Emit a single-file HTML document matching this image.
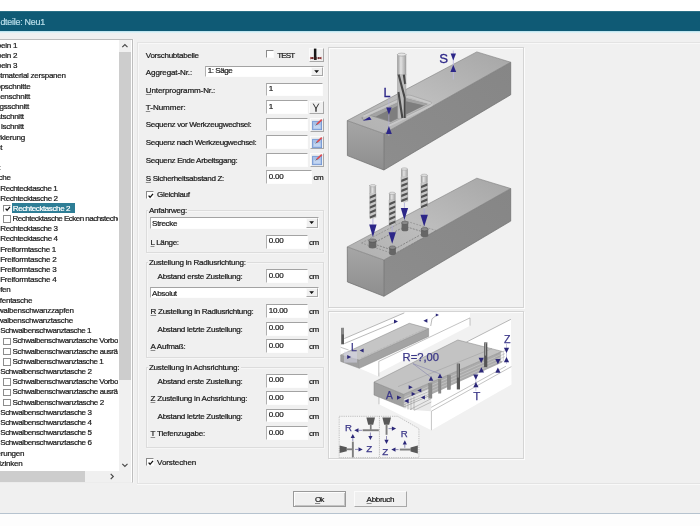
<!DOCTYPE html>
<html><head><meta charset="utf-8"><title>Neu1</title>
<style>
html,body{margin:0;padding:0;overflow:hidden;}
body{width:700px;height:526px;position:relative;overflow:hidden;background:#f0f0f0;font-family:"Liberation Sans",sans-serif;}
div{position:absolute;-webkit-text-stroke:0.22px currentColor;}
</style></head><body><div style="left:-6px;top:-6px;width:712px;height:538px;overflow:hidden;will-change:transform;background:#f0f0f0;filter:blur(0.35px);"><div style="left:6px;top:6px;width:700px;height:526px;">

<div style="position:absolute;left:-6px;top:-6px;width:712px;height:17px;background:#ffffff;"></div>
<div style="position:absolute;left:-6px;top:11px;width:712px;height:20px;background:#0f5a75;"></div>
<div style="position:absolute;left:-6px;top:11px;width:712px;height:1px;background:#2a6f86;"></div>
<div style="position:absolute;left:-6px;top:30.7px;width:712px;height:1.9px;background:linear-gradient(#b4dfec,#eaf6f9);"></div>
<div style="position:absolute;left:0.4px;top:16.8px;line-height:10px;font-size:8.9px;letter-spacing:-0.24156197916666677px;color:#b9dde9;white-space:nowrap;">dteile: Neu1</div>
<div style="position:absolute;left:-6px;top:513.4px;width:712px;height:1px;background:#b6c3cf;"></div>
<div style="position:absolute;left:-6px;top:514.4px;width:712px;height:18px;background:#fdfdfd;"></div>
<div style="position:absolute;left:-7px;top:39.2px;width:139.6px;height:443.4px;background:#fff;box-sizing:border-box;border:1px solid #bcbcbc;border-bottom-color:#ececec;border-right:1.5px solid #bebebe;"></div>
<div style="position:absolute;left:119.2px;top:40.2px;width:11.6px;height:430.6px;background:#f0f0f0;"></div>
<div style="position:absolute;left:119.2px;top:52.2px;width:11.6px;height:327.8px;background:#cdcdcd;"></div>
<svg style="position:absolute;left:119.2px;top:40.2px" width="12" height="12" viewBox="0 0 12 12"><path d="M3.3 7.2 L5.9 4.6 L8.5 7.2" fill="none" stroke="#4a4a4a" stroke-width="1.2"/></svg>
<svg style="position:absolute;left:119.2px;top:459px" width="12" height="12" viewBox="0 0 12 12"><path d="M3.3 4.8 L5.9 7.4 L8.5 4.8" fill="none" stroke="#4a4a4a" stroke-width="1.2"/></svg>
<div style="position:absolute;left:-6px;top:470.8px;width:136.8px;height:11px;background:#f0f0f0;"></div>
<div style="position:absolute;left:-6px;top:470.8px;width:91px;height:11px;background:#cdcdcd;"></div>
<svg style="position:absolute;left:106px;top:470.8px" width="12" height="11" viewBox="0 0 12 11"><path d="M4.7 2.9 L7.3 5.5 L4.7 8.1" fill="none" stroke="#4a4a4a" stroke-width="1.2"/></svg>
<div style="left:0;top:40.2px;width:118.2px;height:431.2px;overflow:hidden;">
<div style="position:absolute;left:-3.1832312500000026px;top:0.6px;line-height:10px;font-size:8.05px;letter-spacing:-0.27px;color:#1a1a1a;white-space:nowrap;">bein 1</div>
<div style="position:absolute;left:-3.083231250000001px;top:10.795px;line-height:10px;font-size:8.05px;letter-spacing:-0.27px;color:#1a1a1a;white-space:nowrap;">bein 2</div>
<div style="position:absolute;left:-3.083231250000001px;top:20.990000000000002px;line-height:10px;font-size:8.05px;letter-spacing:-0.27px;color:#1a1a1a;white-space:nowrap;">bein 3</div>
<div style="position:absolute;left:-3.5923640625px;top:31.184999999999995px;line-height:10px;font-size:8.05px;letter-spacing:-0.27px;color:#1a1a1a;white-space:nowrap;">stmaterial zerspanen</div>
<div style="position:absolute;left:-3.566805468750005px;top:41.38px;line-height:10px;font-size:8.05px;letter-spacing:-0.27px;color:#1a1a1a;white-space:nowrap;">ppschnitte</div>
<div style="position:absolute;left:-4.066805468750005px;top:51.57500000000001px;line-height:10px;font-size:8.05px;letter-spacing:-0.27px;color:#1a1a1a;white-space:nowrap;">genschnitt</div>
<div style="position:absolute;left:-0.40768984375000317px;top:61.77px;line-height:10px;font-size:8.05px;letter-spacing:-0.27px;color:#1a1a1a;white-space:nowrap;">gsschnitt</div>
<div style="position:absolute;left:-3.719206250000003px;top:71.965px;line-height:10px;font-size:8.05px;letter-spacing:-0.27px;color:#1a1a1a;white-space:nowrap;">atschnitt</div>
<div style="position:absolute;left:-5.237689843750001px;top:82.16px;line-height:10px;font-size:8.05px;letter-spacing:-0.27px;color:#1a1a1a;white-space:nowrap;">h lschnitt</div>
<div style="position:absolute;left:-2.093266406250003px;top:92.35499999999998px;line-height:10px;font-size:8.05px;letter-spacing:-0.27px;color:#1a1a1a;white-space:nowrap;">rkierung</div>
<div style="position:absolute;left:-3.391516406250001px;top:102.55px;line-height:10px;font-size:8.05px;letter-spacing:-0.27px;color:#1a1a1a;white-space:nowrap;">st</div>
<div style="position:absolute;left:0px;top:112.74500000000002px;line-height:10px;font-size:8.05px;letter-spacing:0.0px;color:#1a1a1a;white-space:nowrap;"></div>
<div style="position:absolute;left:-5.543574218750001px;top:122.94000000000001px;line-height:10px;font-size:8.05px;letter-spacing:-0.27px;color:#1a1a1a;white-space:nowrap;">e:</div>
<div style="position:absolute;left:-5.294115625px;top:133.13500000000002px;line-height:10px;font-size:8.05px;letter-spacing:-0.27px;color:#1a1a1a;white-space:nowrap;">sche</div>
<div style="position:absolute;left:0.3px;top:143.33px;line-height:10px;font-size:8.05px;letter-spacing:-0.43671484375000036px;color:#1a1a1a;white-space:nowrap;">Rechtecktasche 1</div>
<div style="position:absolute;left:0.3px;top:153.525px;line-height:10px;font-size:8.05px;letter-spacing:-0.41796484375000054px;color:#1a1a1a;white-space:nowrap;">Rechtecktasche 2</div>
<div style="position:absolute;left:3.4px;top:164.42000000000002px;width:7.6px;height:7.6px;background:#fff;box-sizing:border-box;border-top:1px solid #8a8a8a;border-left:1px solid #8a8a8a;border-right:1px solid #fbfbfb;border-bottom:1px solid #fbfbfb;"><svg width="8" height="8" viewBox="0 0 8 8" style="position:absolute;left:-0.5px;top:-0.5px"><path d="M1.6 3.6 L3.1 5.3 L6 1.9" fill="none" stroke="#111" stroke-width="1.3"/></svg></div>
<div style="position:absolute;left:11.9px;top:162.92000000000002px;width:63px;height:9.6px;background:#2e7e96;"></div>
<div style="position:absolute;left:12.8px;top:163.72px;line-height:10px;font-size:8.05px;letter-spacing:-0.41796484375000054px;color:#fff;white-space:nowrap;">Rechtecktasche 2</div>
<div style="position:absolute;left:3.4px;top:175.115px;width:7.6px;height:7.6px;background:#fff;box-sizing:border-box;border:1px solid #8c8c8c;"></div>
<div style="position:absolute;left:12.6px;top:173.915px;line-height:10px;font-size:8.05px;letter-spacing:-0.542852587890625px;color:#1a1a1a;white-space:nowrap;">Rechtecktasche Ecken nachstechen</div>
<div style="position:absolute;left:0.3px;top:184.10999999999999px;line-height:10px;font-size:8.05px;letter-spacing:-0.4242148437500002px;color:#1a1a1a;white-space:nowrap;">Rechtecktasche 3</div>
<div style="position:absolute;left:0.3px;top:194.30500000000004px;line-height:10px;font-size:8.05px;letter-spacing:-0.41796484375000054px;color:#1a1a1a;white-space:nowrap;">Rechtecktasche 4</div>
<div style="position:absolute;left:0.2px;top:204.50000000000003px;line-height:10px;font-size:8.05px;letter-spacing:-0.2809374511718752px;color:#1a1a1a;white-space:nowrap;">Freiformtasche 1</div>
<div style="position:absolute;left:0.2px;top:214.69500000000002px;line-height:10px;font-size:8.05px;letter-spacing:-0.26218745117187536px;color:#1a1a1a;white-space:nowrap;">Freiformtasche 2</div>
<div style="position:absolute;left:0.2px;top:224.89000000000001px;line-height:10px;font-size:8.05px;letter-spacing:-0.26218745117187536px;color:#1a1a1a;white-space:nowrap;">Freiformtasche 3</div>
<div style="position:absolute;left:0.2px;top:235.085px;line-height:10px;font-size:8.05px;letter-spacing:-0.26218745117187536px;color:#1a1a1a;white-space:nowrap;">Freiformtasche 4</div>
<div style="position:absolute;left:-4.057689843750001px;top:245.28px;line-height:10px;font-size:8.05px;letter-spacing:-0.27px;color:#1a1a1a;white-space:nowrap;">pfen</div>
<div style="position:absolute;left:-4.4553796875000025px;top:255.475px;line-height:10px;font-size:8.05px;letter-spacing:-0.27px;color:#1a1a1a;white-space:nowrap;">pfentasche</div>
<div style="position:absolute;left:-6.446660937500003px;top:265.67px;line-height:10px;font-size:8.05px;letter-spacing:-0.27px;color:#1a1a1a;white-space:nowrap;">hwalbenschwanzzapfen</div>
<div style="position:absolute;left:-6.694603125000004px;top:275.865px;line-height:10px;font-size:8.05px;letter-spacing:-0.27px;color:#1a1a1a;white-space:nowrap;">hwalbenschwanztasche</div>
<div style="position:absolute;left:0.2px;top:286.06000000000006px;line-height:10px;font-size:8.05px;letter-spacing:-0.4221886393229172px;color:#1a1a1a;white-space:nowrap;">Schwalbenschwanztasche 1</div>
<div style="position:absolute;left:3.4px;top:297.45500000000004px;width:7.6px;height:7.6px;background:#fff;box-sizing:border-box;border:1px solid #8c8c8c;"></div>
<div style="position:absolute;left:12.6px;top:296.25500000000005px;line-height:10px;font-size:8.05px;letter-spacing:-0.4313932617187506px;color:#1a1a1a;white-space:nowrap;">Schwalbenschwanztasche Vorbohren</div>
<div style="position:absolute;left:3.4px;top:307.65000000000003px;width:7.6px;height:7.6px;background:#fff;box-sizing:border-box;border:1px solid #8c8c8c;"></div>
<div style="position:absolute;left:12.6px;top:306.45000000000005px;line-height:10px;font-size:8.05px;letter-spacing:-0.4165427490234377px;color:#1a1a1a;white-space:nowrap;">Schwalbenschwanztasche ausräumen</div>
<div style="position:absolute;left:3.4px;top:317.845px;width:7.6px;height:7.6px;background:#fff;box-sizing:border-box;border:1px solid #8c8c8c;"></div>
<div style="position:absolute;left:12.6px;top:316.64500000000004px;line-height:10px;font-size:8.05px;letter-spacing:-0.4305219726562501px;color:#1a1a1a;white-space:nowrap;">Schwalbenschwanztasche 1</div>
<div style="position:absolute;left:0.2px;top:326.84000000000003px;line-height:10px;font-size:8.05px;letter-spacing:-0.4055219726562503px;color:#1a1a1a;white-space:nowrap;">Schwalbenschwanztasche 2</div>
<div style="position:absolute;left:3.4px;top:338.235px;width:7.6px;height:7.6px;background:#fff;box-sizing:border-box;border:1px solid #8c8c8c;"></div>
<div style="position:absolute;left:12.6px;top:337.035px;line-height:10px;font-size:8.05px;letter-spacing:-0.4313932617187506px;color:#1a1a1a;white-space:nowrap;">Schwalbenschwanztasche Vorbohren</div>
<div style="position:absolute;left:3.4px;top:348.43px;width:7.6px;height:7.6px;background:#fff;box-sizing:border-box;border:1px solid #8c8c8c;"></div>
<div style="position:absolute;left:12.6px;top:347.23px;line-height:10px;font-size:8.05px;letter-spacing:-0.4165427490234377px;color:#1a1a1a;white-space:nowrap;">Schwalbenschwanztasche ausräumen</div>
<div style="position:absolute;left:3.4px;top:358.625px;width:7.6px;height:7.6px;background:#fff;box-sizing:border-box;border:1px solid #8c8c8c;"></div>
<div style="position:absolute;left:12.6px;top:357.425px;line-height:10px;font-size:8.05px;letter-spacing:-0.41385530598958375px;color:#1a1a1a;white-space:nowrap;">Schwalbenschwanztasche 2</div>
<div style="position:absolute;left:0.2px;top:367.62px;line-height:10px;font-size:8.05px;letter-spacing:-0.4055219726562503px;color:#1a1a1a;white-space:nowrap;">Schwalbenschwanztasche 3</div>
<div style="position:absolute;left:0.2px;top:377.81500000000005px;line-height:10px;font-size:8.05px;letter-spacing:-0.4055219726562503px;color:#1a1a1a;white-space:nowrap;">Schwalbenschwanztasche 4</div>
<div style="position:absolute;left:0.2px;top:388.01000000000005px;line-height:10px;font-size:8.05px;letter-spacing:-0.4055219726562503px;color:#1a1a1a;white-space:nowrap;">Schwalbenschwanztasche 5</div>
<div style="position:absolute;left:0.2px;top:398.20500000000004px;line-height:10px;font-size:8.05px;letter-spacing:-0.4055219726562503px;color:#1a1a1a;white-space:nowrap;">Schwalbenschwanztasche 6</div>
<div style="position:absolute;left:-3.4231226562500017px;top:408.40000000000003px;line-height:10px;font-size:8.05px;letter-spacing:-0.27px;color:#1a1a1a;white-space:nowrap;">erungen</div>
<div style="position:absolute;left:-5.045198437500002px;top:418.595px;line-height:10px;font-size:8.05px;letter-spacing:-0.27px;color:#1a1a1a;white-space:nowrap;">eizinken</div>
<div style="position:absolute;left:0.4px;top:428.79px;line-height:10px;font-size:8.05px;letter-spacing:-0.44635240384615404px;color:#1a1a1a;white-space:nowrap;">fernzinken  l</div>
</div>
<div style="position:absolute;left:133.4px;top:39.2px;width:1px;height:444px;background:#f7f7f7;"></div>
<div style="position:absolute;left:137.0px;top:41.8px;width:570px;height:442px;box-sizing:border-box;border:1px solid #e3e3e3;border-right:none;box-shadow:inset 1px 1px 0 #f8f8f8, 0 1px 0 #f9f9f9;"></div>
<div style="position:absolute;left:145.8px;top:50.6px;line-height:10px;font-size:8.05px;letter-spacing:-0.2857292187500003px;color:#1a1a1a;white-space:nowrap;">Vorschubtabelle</div>
<div style="position:absolute;left:265.8px;top:50.0px;width:7.9px;height:7.9px;background:#fff;box-sizing:border-box;border-top:1px solid #8a8a8a;border-left:1px solid #8a8a8a;border-right:1px solid #fbfbfb;border-bottom:1px solid #fbfbfb;"></div>
<div style="position:absolute;left:277.3px;top:50.7px;line-height:10px;font-size:8.05px;letter-spacing:-0.8933210937500009px;color:#1a1a1a;white-space:nowrap;">TEST</div>
<div style="position:absolute;left:309.4px;top:47.6px;width:14.6px;height:14.0px;background:#f0f0f0;box-sizing:border-box;border-top:1px solid #fbfbfb;border-left:1px solid #fbfbfb;border-right:1px solid #a8a8a8;border-bottom:1px solid #a8a8a8;"><svg width="14" height="14" viewBox="0 0 14 14" style="position:absolute;left:-1px;top:-1px">
<rect x="4.9" y="0.6" width="2.5" height="11.2" fill="#151515"/>
<path d="M0.8 10.1 H12.6" stroke="#c98a8a" stroke-width="0.5"/>
<path d="M1.4 8.8 L4.0 10.1 L1.4 11.4 Z M12.4 8.8 L9.8 10.1 L12.4 11.4 Z" fill="#8a2a2a"/>
<circle cx="3.6" cy="10.1" r="1.1" fill="#6a2a2a"/><circle cx="9.6" cy="10.1" r="1.1" fill="#6a2a2a"/>
<rect x="5.0" y="8.8" width="2.6" height="3.0" fill="#2a1a1a"/></svg></div>
<div style="position:absolute;left:145.8px;top:67.69999999999999px;line-height:10px;font-size:8.05px;letter-spacing:-0.12122043269230814px;color:#1a1a1a;white-space:nowrap;">Aggregat-Nr.:</div>
<div style="position:absolute;left:205.4px;top:65.7px;width:118.4px;height:10.9px;background:#fff;box-sizing:border-box;border-top:1px solid #a3a3a3;border-left:1px solid #b0b0b0;border-right:1px solid #fdfdfd;border-bottom:1px solid #fdfdfd;"></div>
<div style="position:absolute;left:311.2px;top:66.5px;width:11.8px;height:9.5px;background:#f0f0f0;box-sizing:border-box;border-top:1px solid #fbfbfb;border-left:1px solid #fbfbfb;border-right:1px solid #a8a8a8;border-bottom:1px solid #a8a8a8;"><svg width="12" height="9" viewBox="0 0 12 9" style="position:absolute;left:-1px;top:-1px"><path d="M3.2 3.3 L8.0 3.3 L5.6 5.9 Z" fill="#111"/></svg></div>
<div style="position:absolute;left:207.70000000000002px;top:66.35000000000001px;line-height:10px;font-size:8.05px;letter-spacing:-0.43580200892857185px;color:#1a1a1a;white-space:nowrap;">1: Säge</div>
<div style="position:absolute;left:145.8px;top:85.6px;line-height:10px;font-size:8.05px;letter-spacing:-0.12056445312499954px;color:#1a1a1a;white-space:nowrap;"><span style="text-decoration:underline;text-underline-offset:0.6px;text-decoration-thickness:0.6px;text-decoration-color:#8a8a8a">U</span>nterprogramm-Nr.:</div>
<div style="position:absolute;left:265.5px;top:82.6px;width:57.8px;height:13.6px;background:#fff;box-sizing:border-box;border-top:1px solid #a3a3a3;border-left:1px solid #b0b0b0;border-right:1px solid #fdfdfd;border-bottom:1px solid #fdfdfd;"></div>
<div style="position:absolute;left:268.7px;top:83.89999999999999px;line-height:10px;font-size:8.05px;letter-spacing:-0.27px;color:#1a1a1a;white-space:nowrap;">1</div>
<div style="position:absolute;left:145.8px;top:102.6px;line-height:10px;font-size:8.05px;letter-spacing:-0.03893081597222271px;color:#1a1a1a;white-space:nowrap;"><span style="text-decoration:underline;text-underline-offset:0.6px;text-decoration-thickness:0.6px;text-decoration-color:#8a8a8a">T</span>-Nummer:</div>
<div style="position:absolute;left:265.5px;top:100.4px;width:42px;height:13.6px;background:#fff;box-sizing:border-box;border-top:1px solid #a3a3a3;border-left:1px solid #b0b0b0;border-right:1px solid #fdfdfd;border-bottom:1px solid #fdfdfd;"></div>
<div style="position:absolute;left:268.7px;top:101.7px;line-height:10px;font-size:8.05px;letter-spacing:-0.27px;color:#1a1a1a;white-space:nowrap;">1</div>
<div style="position:absolute;left:309.2px;top:100.60000000000001px;width:14.6px;height:13.4px;background:#f0f0f0;box-sizing:border-box;border-top:1px solid #fbfbfb;border-left:1px solid #fbfbfb;border-right:1px solid #a8a8a8;border-bottom:1px solid #a8a8a8;"><svg width="14" height="13" viewBox="0 0 14 13" style="position:absolute;left:-1px;top:-1px">
<path d="M4.2 2.6 L7 7.6 L9.8 2.6" fill="none" stroke="#333" stroke-width="1"/><path d="M7 7.2 V10.8" stroke="#333" stroke-width="1.4"/></svg></div>
<div style="position:absolute;left:145.8px;top:120.4px;line-height:10px;font-size:8.05px;letter-spacing:-0.3302395926339291px;color:#1a1a1a;white-space:nowrap;">Sequenz vor Werkzeugwechsel:</div>
<div style="position:absolute;left:265.5px;top:117.9px;width:42.4px;height:13.6px;background:#fff;box-sizing:border-box;border-top:1px solid #a3a3a3;border-left:1px solid #b0b0b0;border-right:1px solid #fdfdfd;border-bottom:1px solid #fdfdfd;"></div>
<div style="position:absolute;left:309.8px;top:118.10000000000001px;width:14.0px;height:13.6px;background:#f0f0f0;box-sizing:border-box;border-top:1px solid #fbfbfb;border-left:1px solid #fbfbfb;border-right:1px solid #a8a8a8;border-bottom:1px solid #a8a8a8;"><svg width="14" height="14" viewBox="0 0 14 14" style="position:absolute;left:-1px;top:-1px">
<rect x="2.6" y="3.3" width="9.0" height="8.4" fill="#a6c0e8" stroke="#6a8fd0" stroke-width="0.8"/>
<rect x="3.8" y="7.1" width="6.6" height="3.4" fill="#c3d5f1"/>
<path d="M7.0 6.2 L11.8 1.6" stroke="#dc4b50" stroke-width="1.6"/>
<path d="M5.8 7.4 L7.2 6.0" stroke="#555" stroke-width="0.9"/></svg></div>
<div style="position:absolute;left:145.8px;top:137.9px;line-height:10px;font-size:8.05px;letter-spacing:-0.3662085668103449px;color:#1a1a1a;white-space:nowrap;">Sequenz nach Werkzeugwechsel:</div>
<div style="position:absolute;left:265.5px;top:135.4px;width:42.4px;height:13.6px;background:#fff;box-sizing:border-box;border-top:1px solid #a3a3a3;border-left:1px solid #b0b0b0;border-right:1px solid #fdfdfd;border-bottom:1px solid #fdfdfd;"></div>
<div style="position:absolute;left:309.8px;top:135.6px;width:14.0px;height:13.6px;background:#f0f0f0;box-sizing:border-box;border-top:1px solid #fbfbfb;border-left:1px solid #fbfbfb;border-right:1px solid #a8a8a8;border-bottom:1px solid #a8a8a8;"><svg width="14" height="14" viewBox="0 0 14 14" style="position:absolute;left:-1px;top:-1px">
<rect x="2.6" y="3.3" width="9.0" height="8.4" fill="#a6c0e8" stroke="#6a8fd0" stroke-width="0.8"/>
<rect x="3.8" y="7.1" width="6.6" height="3.4" fill="#c3d5f1"/>
<path d="M7.0 6.2 L11.8 1.6" stroke="#dc4b50" stroke-width="1.6"/>
<path d="M5.8 7.4 L7.2 6.0" stroke="#555" stroke-width="0.9"/></svg></div>
<div style="position:absolute;left:145.8px;top:155.5px;line-height:10px;font-size:8.05px;letter-spacing:-0.3283220312500009px;color:#1a1a1a;white-space:nowrap;">Sequenz Ende Arbeitsgang:</div>
<div style="position:absolute;left:265.5px;top:153.0px;width:42.4px;height:13.6px;background:#fff;box-sizing:border-box;border-top:1px solid #a3a3a3;border-left:1px solid #b0b0b0;border-right:1px solid #fdfdfd;border-bottom:1px solid #fdfdfd;"></div>
<div style="position:absolute;left:309.8px;top:153.2px;width:14.0px;height:13.6px;background:#f0f0f0;box-sizing:border-box;border-top:1px solid #fbfbfb;border-left:1px solid #fbfbfb;border-right:1px solid #a8a8a8;border-bottom:1px solid #a8a8a8;"><svg width="14" height="14" viewBox="0 0 14 14" style="position:absolute;left:-1px;top:-1px">
<rect x="2.6" y="3.3" width="9.0" height="8.4" fill="#a6c0e8" stroke="#6a8fd0" stroke-width="0.8"/>
<rect x="3.8" y="7.1" width="6.6" height="3.4" fill="#c3d5f1"/>
<path d="M7.0 6.2 L11.8 1.6" stroke="#dc4b50" stroke-width="1.6"/>
<path d="M5.8 7.4 L7.2 6.0" stroke="#555" stroke-width="0.9"/></svg></div>
<div style="position:absolute;left:145.8px;top:173.7px;line-height:10px;font-size:8.05px;letter-spacing:-0.31586250000000055px;color:#1a1a1a;white-space:nowrap;"><span style="text-decoration:underline;text-underline-offset:0.6px;text-decoration-thickness:0.6px;text-decoration-color:#8a8a8a">S</span> Sicherheitsabstand Z:</div>
<div style="position:absolute;left:265.5px;top:170.4px;width:46.6px;height:13.6px;background:#fff;box-sizing:border-box;border-top:1px solid #a3a3a3;border-left:1px solid #b0b0b0;border-right:1px solid #fdfdfd;border-bottom:1px solid #fdfdfd;"></div>
<div style="position:absolute;left:268.7px;top:171.7px;line-height:10px;font-size:8.05px;letter-spacing:-0.16692246093750063px;color:#1a1a1a;white-space:nowrap;">0.00</div>
<div style="position:absolute;left:313.5px;top:173.4px;line-height:10px;font-size:8.05px;letter-spacing:-0.5653878906250007px;color:#1a1a1a;white-space:nowrap;">cm</div>
<div style="position:absolute;left:146.0px;top:191.0px;width:7.8px;height:7.8px;background:#fff;box-sizing:border-box;border-top:1px solid #8a8a8a;border-left:1px solid #8a8a8a;border-right:1px solid #fbfbfb;border-bottom:1px solid #fbfbfb;"><svg width="8" height="8" viewBox="0 0 8 8" style="position:absolute;left:-0.5px;top:-0.5px"><path d="M1.6 3.6 L3.1 5.3 L6 1.9" fill="none" stroke="#111" stroke-width="1.3"/></svg></div>
<div style="position:absolute;left:157.1px;top:190.29999999999998px;line-height:10px;font-size:8.05px;letter-spacing:-0.32967148437500027px;color:#1a1a1a;white-space:nowrap;">Gleichlauf</div>
<div style="position:absolute;left:145.6px;top:210.2px;width:178.2px;height:42.8px;box-sizing:border-box;border:1px solid #dcdcdc;box-shadow:0.6px 0.6px 0 #fbfbfb, inset 0.6px 0.6px 0 #fbfbfb;"></div>
<div style="position:absolute;left:148.2px;top:206.2px;width:40.300000000000004px;height:9px;background:#f0f0f0;"></div>
<div style="position:absolute;left:148.9px;top:206.2px;line-height:10px;font-size:8.05px;letter-spacing:-0.2621931250000003px;color:#1a1a1a;white-space:nowrap;">Anfahrweg:</div>
<div style="position:absolute;left:149.8px;top:217.4px;width:169.0px;height:11.2px;background:#fff;box-sizing:border-box;border-top:1px solid #a3a3a3;border-left:1px solid #b0b0b0;border-right:1px solid #fdfdfd;border-bottom:1px solid #fdfdfd;"></div>
<div style="position:absolute;left:306.2px;top:218.20000000000002px;width:11.8px;height:9.799999999999999px;background:#f0f0f0;box-sizing:border-box;border-top:1px solid #fbfbfb;border-left:1px solid #fbfbfb;border-right:1px solid #a8a8a8;border-bottom:1px solid #a8a8a8;"><svg width="12" height="9" viewBox="0 0 12 9" style="position:absolute;left:-1px;top:-1px"><path d="M3.2 3.3 L8.0 3.3 L5.6 5.9 Z" fill="#111"/></svg></div>
<div style="position:absolute;left:152.10000000000002px;top:218.79999999999998px;line-height:10px;font-size:8.05px;letter-spacing:-0.3272511160714292px;color:#1a1a1a;white-space:nowrap;">Strecke</div>
<div style="position:absolute;left:150.6px;top:237.79999999999998px;line-height:10px;font-size:8.05px;letter-spacing:-0.37958115234375045px;color:#1a1a1a;white-space:nowrap;"><span style="text-decoration:underline;text-underline-offset:0.6px;text-decoration-thickness:0.6px;text-decoration-color:#8a8a8a">L</span> Länge:</div>
<div style="position:absolute;left:265.5px;top:235.0px;width:42.4px;height:13.6px;background:#fff;box-sizing:border-box;border-top:1px solid #a3a3a3;border-left:1px solid #b0b0b0;border-right:1px solid #fdfdfd;border-bottom:1px solid #fdfdfd;"></div>
<div style="position:absolute;left:268.7px;top:236.29999999999998px;line-height:10px;font-size:8.05px;letter-spacing:-0.16692246093750063px;color:#1a1a1a;white-space:nowrap;">0.00</div>
<div style="position:absolute;left:309.0px;top:238.0px;line-height:10px;font-size:8.05px;letter-spacing:-0.4653878906250002px;color:#1a1a1a;white-space:nowrap;">cm</div>
<div style="position:absolute;left:145.6px;top:261.8px;width:178.2px;height:96.2px;box-sizing:border-box;border:1px solid #dcdcdc;box-shadow:0.6px 0.6px 0 #fbfbfb, inset 0.6px 0.6px 0 #fbfbfb;"></div>
<div style="position:absolute;left:148.2px;top:257.8px;width:99.10000000000001px;height:9px;background:#f0f0f0;"></div>
<div style="position:absolute;left:148.9px;top:257.8px;line-height:10px;font-size:8.05px;letter-spacing:-0.23838976293103445px;color:#1a1a1a;white-space:nowrap;">Zustellung in Radiusrichtung:</div>
<div style="position:absolute;left:157.6px;top:272.1px;line-height:10px;font-size:8.05px;letter-spacing:-0.25544478125000014px;color:#1a1a1a;white-space:nowrap;">Abstand erste Zustellung:</div>
<div style="position:absolute;left:265.5px;top:269.3px;width:42.4px;height:13.6px;background:#fff;box-sizing:border-box;border-top:1px solid #a3a3a3;border-left:1px solid #b0b0b0;border-right:1px solid #fdfdfd;border-bottom:1px solid #fdfdfd;"></div>
<div style="position:absolute;left:268.7px;top:270.6px;line-height:10px;font-size:8.05px;letter-spacing:-0.16692246093750063px;color:#1a1a1a;white-space:nowrap;">0.00</div>
<div style="position:absolute;left:309.0px;top:272.3px;line-height:10px;font-size:8.05px;letter-spacing:-0.4653878906250002px;color:#1a1a1a;white-space:nowrap;">cm</div>
<div style="position:absolute;left:149.8px;top:287.3px;width:169.0px;height:10.8px;background:#fff;box-sizing:border-box;border-top:1px solid #a3a3a3;border-left:1px solid #b0b0b0;border-right:1px solid #fdfdfd;border-bottom:1px solid #fdfdfd;"></div>
<div style="position:absolute;left:306.2px;top:288.1px;width:11.8px;height:9.4px;background:#f0f0f0;box-sizing:border-box;border-top:1px solid #fbfbfb;border-left:1px solid #fbfbfb;border-right:1px solid #a8a8a8;border-bottom:1px solid #a8a8a8;"><svg width="12" height="9" viewBox="0 0 12 9" style="position:absolute;left:-1px;top:-1px"><path d="M3.2 3.3 L8.0 3.3 L5.6 5.9 Z" fill="#111"/></svg></div>
<div style="position:absolute;left:152.10000000000002px;top:288.5px;line-height:10px;font-size:8.05px;letter-spacing:-0.30721763392857226px;color:#1a1a1a;white-space:nowrap;">Absolut</div>
<div style="position:absolute;left:150.6px;top:307.1px;line-height:10px;font-size:8.05px;letter-spacing:-0.292364616935484px;color:#1a1a1a;white-space:nowrap;"><span style="text-decoration:underline;text-underline-offset:0.6px;text-decoration-thickness:0.6px;text-decoration-color:#8a8a8a">R</span> Zustellung in Radiusrichtung:</div>
<div style="position:absolute;left:265.5px;top:304.3px;width:42.4px;height:13.6px;background:#fff;box-sizing:border-box;border-top:1px solid #a3a3a3;border-left:1px solid #b0b0b0;border-right:1px solid #fdfdfd;border-bottom:1px solid #fdfdfd;"></div>
<div style="position:absolute;left:268.7px;top:305.6px;line-height:10px;font-size:8.05px;letter-spacing:-0.24894953125000044px;color:#1a1a1a;white-space:nowrap;">10.00</div>
<div style="position:absolute;left:309.0px;top:307.3px;line-height:10px;font-size:8.05px;letter-spacing:-0.4653878906250002px;color:#1a1a1a;white-space:nowrap;">cm</div>
<div style="position:absolute;left:157.6px;top:324.8px;line-height:10px;font-size:8.05px;letter-spacing:-0.29732091346153855px;color:#1a1a1a;white-space:nowrap;">Abstand letzte Zustellung:</div>
<div style="position:absolute;left:265.5px;top:322.0px;width:42.4px;height:13.6px;background:#fff;box-sizing:border-box;border-top:1px solid #a3a3a3;border-left:1px solid #b0b0b0;border-right:1px solid #fdfdfd;border-bottom:1px solid #fdfdfd;"></div>
<div style="position:absolute;left:268.7px;top:323.3px;line-height:10px;font-size:8.05px;letter-spacing:-0.16692246093750063px;color:#1a1a1a;white-space:nowrap;">0.00</div>
<div style="position:absolute;left:309.0px;top:325.0px;line-height:10px;font-size:8.05px;letter-spacing:-0.4653878906250002px;color:#1a1a1a;white-space:nowrap;">cm</div>
<div style="position:absolute;left:150.6px;top:342.2px;line-height:10px;font-size:8.05px;letter-spacing:-0.24857395833333365px;color:#1a1a1a;white-space:nowrap;"><span style="text-decoration:underline;text-underline-offset:0.6px;text-decoration-thickness:0.6px;text-decoration-color:#8a8a8a">A</span> Aufmaß:</div>
<div style="position:absolute;left:265.5px;top:339.4px;width:42.4px;height:13.6px;background:#fff;box-sizing:border-box;border-top:1px solid #a3a3a3;border-left:1px solid #b0b0b0;border-right:1px solid #fdfdfd;border-bottom:1px solid #fdfdfd;"></div>
<div style="position:absolute;left:268.7px;top:340.7px;line-height:10px;font-size:8.05px;letter-spacing:-0.16692246093750063px;color:#1a1a1a;white-space:nowrap;">0.00</div>
<div style="position:absolute;left:309.0px;top:342.4px;line-height:10px;font-size:8.05px;letter-spacing:-0.4653878906250002px;color:#1a1a1a;white-space:nowrap;">cm</div>
<div style="position:absolute;left:145.6px;top:366.5px;width:178.2px;height:81.5px;box-sizing:border-box;border:1px solid #dcdcdc;box-shadow:0.6px 0.6px 0 #fbfbfb, inset 0.6px 0.6px 0 #fbfbfb;"></div>
<div style="position:absolute;left:148.2px;top:362.5px;width:92.7px;height:9px;background:#f0f0f0;"></div>
<div style="position:absolute;left:148.9px;top:362.5px;line-height:10px;font-size:8.05px;letter-spacing:-0.211386545138889px;color:#1a1a1a;white-space:nowrap;">Zustellung in Achsrichtung:</div>
<div style="position:absolute;left:157.6px;top:376.8px;line-height:10px;font-size:8.05px;letter-spacing:-0.25544478125000014px;color:#1a1a1a;white-space:nowrap;">Abstand erste Zustellung:</div>
<div style="position:absolute;left:265.5px;top:374.0px;width:42.4px;height:13.6px;background:#fff;box-sizing:border-box;border-top:1px solid #a3a3a3;border-left:1px solid #b0b0b0;border-right:1px solid #fdfdfd;border-bottom:1px solid #fdfdfd;"></div>
<div style="position:absolute;left:268.7px;top:375.3px;line-height:10px;font-size:8.05px;letter-spacing:-0.16692246093750063px;color:#1a1a1a;white-space:nowrap;">0.00</div>
<div style="position:absolute;left:309.0px;top:377.0px;line-height:10px;font-size:8.05px;letter-spacing:-0.4653878906250002px;color:#1a1a1a;white-space:nowrap;">cm</div>
<div style="position:absolute;left:150.6px;top:394.1px;line-height:10px;font-size:8.05px;letter-spacing:-0.22969811422413794px;color:#1a1a1a;white-space:nowrap;"><span style="text-decoration:underline;text-underline-offset:0.6px;text-decoration-thickness:0.6px;text-decoration-color:#8a8a8a">Z</span> Zustellung in Achsrichtung:</div>
<div style="position:absolute;left:265.5px;top:391.3px;width:42.4px;height:13.6px;background:#fff;box-sizing:border-box;border-top:1px solid #a3a3a3;border-left:1px solid #b0b0b0;border-right:1px solid #fdfdfd;border-bottom:1px solid #fdfdfd;"></div>
<div style="position:absolute;left:268.7px;top:392.6px;line-height:10px;font-size:8.05px;letter-spacing:-0.16692246093750063px;color:#1a1a1a;white-space:nowrap;">0.00</div>
<div style="position:absolute;left:309.0px;top:394.3px;line-height:10px;font-size:8.05px;letter-spacing:-0.4653878906250002px;color:#1a1a1a;white-space:nowrap;">cm</div>
<div style="position:absolute;left:157.6px;top:411.5px;line-height:10px;font-size:8.05px;letter-spacing:-0.29732091346153855px;color:#1a1a1a;white-space:nowrap;">Abstand letzte Zustellung:</div>
<div style="position:absolute;left:265.5px;top:408.7px;width:42.4px;height:13.6px;background:#fff;box-sizing:border-box;border-top:1px solid #a3a3a3;border-left:1px solid #b0b0b0;border-right:1px solid #fdfdfd;border-bottom:1px solid #fdfdfd;"></div>
<div style="position:absolute;left:268.7px;top:410.0px;line-height:10px;font-size:8.05px;letter-spacing:-0.16692246093750063px;color:#1a1a1a;white-space:nowrap;">0.00</div>
<div style="position:absolute;left:309.0px;top:411.7px;line-height:10px;font-size:8.05px;letter-spacing:-0.4653878906250002px;color:#1a1a1a;white-space:nowrap;">cm</div>
<div style="position:absolute;left:150.6px;top:429.1px;line-height:10px;font-size:8.05px;letter-spacing:-0.21230286458333392px;color:#1a1a1a;white-space:nowrap;"><span style="text-decoration:underline;text-underline-offset:0.6px;text-decoration-thickness:0.6px;text-decoration-color:#8a8a8a">T</span> Tiefenzugabe:</div>
<div style="position:absolute;left:265.5px;top:426.3px;width:42.4px;height:13.6px;background:#fff;box-sizing:border-box;border-top:1px solid #a3a3a3;border-left:1px solid #b0b0b0;border-right:1px solid #fdfdfd;border-bottom:1px solid #fdfdfd;"></div>
<div style="position:absolute;left:268.7px;top:427.6px;line-height:10px;font-size:8.05px;letter-spacing:-0.16692246093750063px;color:#1a1a1a;white-space:nowrap;">0.00</div>
<div style="position:absolute;left:309.0px;top:429.3px;line-height:10px;font-size:8.05px;letter-spacing:-0.4653878906250002px;color:#1a1a1a;white-space:nowrap;">cm</div>
<div style="position:absolute;left:146.0px;top:458.0px;width:7.8px;height:7.8px;background:#fff;box-sizing:border-box;border-top:1px solid #8a8a8a;border-left:1px solid #8a8a8a;border-right:1px solid #fbfbfb;border-bottom:1px solid #fbfbfb;"><svg width="8" height="8" viewBox="0 0 8 8" style="position:absolute;left:-0.5px;top:-0.5px"><path d="M1.6 3.6 L3.1 5.3 L6 1.9" fill="none" stroke="#111" stroke-width="1.3"/></svg></div>
<div style="position:absolute;left:157.1px;top:457.8px;line-height:10px;font-size:8.05px;letter-spacing:-0.12777976562500015px;color:#1a1a1a;white-space:nowrap;">Vorstechen</div>
<div style="position:absolute;left:328.0px;top:47.0px;width:195.6px;height:261.2px;background:#f1f1f1;box-sizing:border-box;border:1px solid #d4d4d4;box-shadow:1px 1px 0 #fcfcfc, inset 1px 1px 0 #fcfcfc;"></div>
<div style="position:absolute;left:328.0px;top:311.0px;width:195.6px;height:147.8px;background:#f1f1f1;box-sizing:border-box;border:1px solid #d4d4d4;box-shadow:1px 1px 0 #fcfcfc, inset 1px 1px 0 #fcfcfc;"></div>
<svg style="position:absolute;left:0;top:0" width="700" height="526" viewBox="0 0 700 526">
<defs>
<linearGradient id="gTop" x1="0" y1="1" x2="1" y2="0"><stop offset="0" stop-color="#b1b1b1"/><stop offset="0.45" stop-color="#bdbdbd"/><stop offset="1" stop-color="#a6a6a6"/></linearGradient>
<linearGradient id="gEnd" x1="0" y1="0" x2="0" y2="1"><stop offset="0" stop-color="#a6a6a6"/><stop offset="1" stop-color="#8e8e8e"/></linearGradient>
<linearGradient id="gSide" x1="0" y1="1" x2="1" y2="0"><stop offset="0" stop-color="#8d8d8d"/><stop offset="1" stop-color="#868686"/></linearGradient>
<linearGradient id="gCyl" x1="0" y1="0" x2="1" y2="0"><stop offset="0" stop-color="#9a9a9a"/><stop offset="0.4" stop-color="#e2e2e2"/><stop offset="1" stop-color="#a2a2a2"/></linearGradient>
<linearGradient id="gFl" x1="0" y1="0" x2="1" y2="0"><stop offset="0" stop-color="#3e3e3e"/><stop offset="0.5" stop-color="#6a6a6a"/><stop offset="1" stop-color="#3a3a3a"/></linearGradient>
</defs>
<polygon points="347.3,120.6 383.9,133.7 510.7,62.2 476.8,51.9" fill="url(#gTop)"/>
<polygon points="347.3,120.6 383.9,133.7 383.9,170.0 347.4,155.6" fill="url(#gEnd)"/>
<polygon points="383.9,133.7 510.7,62.2 510.7,94.8 383.9,170.0" fill="url(#gSide)"/>
<polyline points="347.3,120.6 383.9,133.7 510.7,62.2" fill="none" stroke="#767676" stroke-width="0.6"/>
<polyline points="347.3,120.6 476.8,51.9 510.7,62.2" fill="none" stroke="#7c7c7c" stroke-width="0.6"/>
<line x1="383.9" y1="133.7" x2="383.9" y2="170.0" stroke="#707070" stroke-width="0.7"/>
<polyline points="347.3,120.6 347.4,155.6 383.9,170.0 510.7,94.8 510.7,62.2" fill="none" stroke="#6c6c6c" stroke-width="0.7"/>
<polygon points="347.3,246.9 383.9,260.0 510.7,188.5 476.8,178.2" fill="url(#gTop)"/>
<polygon points="347.3,246.9 383.9,260.0 383.9,296.3 347.4,281.9" fill="url(#gEnd)"/>
<polygon points="383.9,260.0 510.7,188.5 510.7,221.1 383.9,296.3" fill="url(#gSide)"/>
<polyline points="347.3,246.9 383.9,260.0 510.7,188.5" fill="none" stroke="#767676" stroke-width="0.6"/>
<polyline points="347.3,246.9 476.8,178.2 510.7,188.5" fill="none" stroke="#7c7c7c" stroke-width="0.6"/>
<line x1="383.9" y1="260.0" x2="383.9" y2="296.3" stroke="#707070" stroke-width="0.7"/>
<polyline points="347.3,246.9 347.4,281.9 383.9,296.3 510.7,221.1 510.7,188.5" fill="none" stroke="#6c6c6c" stroke-width="0.7"/>
<path d="M363.4 116.4 L405 97.2 Q408 95.8 411 96.8 L430 103 Q433.4 104.2 430.4 105.8 L389 125.6" fill="none" stroke="#c8c8c8" stroke-width="2.1" stroke-linejoin="round"/>
<path d="M363.4 116.4 L405 97.2 Q408 95.8 411 96.8 L430 103 Q433.4 104.2 430.4 105.8 L389 125.6" fill="none" stroke="#8f8f8f" stroke-width="0.4" stroke-linejoin="round" transform="translate(0,-1.4)"/>
<polygon points="369.5,115.6 407,98.4 427.6,104 390.6,122.2" fill="#8b8b8b"/>
<polygon points="369.5,115.6 407,98.4 427.6,104 424,105.4 406.6,101.6 376,116.6" fill="#a2a2a2"/>
<polygon points="376,116.6 406.6,101.6 424,105.4 390.6,121.4" fill="#7e7e7e"/>
<path d="M362.2 117 Q361.4 119.6 365 120" fill="none" stroke="#666" stroke-width="0.5"/>
<polygon points="362.8,120.8 371.6,119.8 369.4,116.8" fill="#2c2688"/>
<line x1="388.8" y1="97" x2="388.8" y2="136" stroke="#b7b3dd" stroke-width="0.7" opacity="0.8"/>
<text x="383.4" y="96.8" font-size="12.6" fill="#2c2688" stroke="#2c2688" stroke-width="0.3" font-family="Liberation Sans, sans-serif">L</text>
<polygon points="386.2,107.4 391.6,107.4 388.9,114.8" fill="#2c2688"/>
<polygon points="386.0,134 391.8,134 388.9,126" fill="#2c2688"/>
<rect x="397.4" y="54.6" width="8.6" height="20.4" fill="url(#gCyl)" stroke="#909090" stroke-width="0.4"/>
<ellipse cx="401.7" cy="54.6" rx="4.3" ry="1.5" fill="#e6e6e6" stroke="#8d8d8d" stroke-width="0.5"/>
<rect x="397.6" y="74.4" width="8.2" height="43.8" fill="#bdbdbd"/>
<path d="M398.6 74.6 L404.8 98 L404.8 118 M403.8 74.6 L405.2 84 M398.4 92 L402.4 118" stroke="#484848" stroke-width="2.1" fill="none" stroke-linejoin="round"/>
<path d="M397.6 74.4 V118.2 M405.8 74.4 V118.2" stroke="#8a8a8a" stroke-width="0.5" fill="none"/>
<line x1="453.3" y1="50.5" x2="453.3" y2="79.5" stroke="#bcb9e0" stroke-width="0.9"/>
<text x="439.2" y="63.4" font-size="13.2" fill="#2c2688" stroke="#2c2688" stroke-width="0.3" font-family="Liberation Sans, sans-serif">S</text>
<polygon points="450.6,53.6 456.0,53.6 453.3,60.4" fill="#2c2688"/>
<polygon points="450.4,72 456.2,72 453.3,64.8" fill="#2c2688"/>
<polygon points="372.6,243.6 405.0,226.4 424.8,232.4 392.6,250.2" fill="none" stroke="#5c5c5c" stroke-width="0.55" stroke-dasharray="2 1.2"/>
<polygon points="361.5,243.0 404.6,220.6 436.4,230.6 393.8,254.0" fill="none" stroke="#7a7a7a" stroke-width="0.5" stroke-dasharray="2 1.2"/>
<rect x="401.6" y="222.8" width="6.6" height="7.1" fill="#666"/>
<ellipse cx="404.9" cy="229.7" rx="3.3" ry="1.6" fill="#666"/>
<ellipse cx="404.9" cy="222.9" rx="3.3" ry="1.7" fill="#8a8a8a" stroke="#4c4c4c" stroke-width="0.5"/>
<line x1="404.4" y1="202.8" x2="404.4" y2="207.9" stroke="#aaa6d6" stroke-width="0.8"/>
<rect x="401.2" y="169.0" width="6.5" height="7.7" fill="url(#gCyl)" stroke="#999" stroke-width="0.3"/>
<ellipse cx="404.4" cy="169.0" rx="3.2" ry="1.2" fill="#e0e0e0" stroke="#8d8d8d" stroke-width="0.4"/>
<path d="M401.2 176.7 H407.7 V201.3 L404.4 202.8 L401.2 201.3 Z" fill="#c8c8c8"/>
<path d="M401.2 179.8 L407.7 177.2 L407.7 179.6 L401.2 182.2 Z" fill="#525252"/>
<path d="M401.2 184.8 L407.7 182.2 L407.7 184.6 L401.2 187.2 Z" fill="#525252"/>
<path d="M401.2 189.8 L407.7 187.2 L407.7 189.6 L401.2 192.2 Z" fill="#525252"/>
<path d="M401.2 194.8 L407.7 192.2 L407.7 194.6 L401.2 197.2 Z" fill="#525252"/>
<path d="M401.2 199.8 L407.7 197.2 L407.7 199.6 L401.2 202.2 Z" fill="#525252"/>
<path d="M401.2 176.7 V201.3 M407.7 176.7 V201.3" stroke="#777" stroke-width="0.4"/>
<polygon points="400.8,207.9 408.1,207.9 404.4,219.9" fill="#2c2688"/>
<rect x="421.0" y="229.1" width="7.2" height="6.5" fill="#666"/>
<ellipse cx="424.6" cy="235.4" rx="3.6" ry="1.6" fill="#666"/>
<ellipse cx="424.6" cy="229.2" rx="3.6" ry="1.7" fill="#8a8a8a" stroke="#4c4c4c" stroke-width="0.5"/>
<line x1="424.2" y1="208.5" x2="424.2" y2="214.8" stroke="#aaa6d6" stroke-width="0.8"/>
<rect x="421.0" y="175.3" width="6.4" height="7.5" fill="url(#gCyl)" stroke="#999" stroke-width="0.3"/>
<ellipse cx="424.2" cy="175.3" rx="3.2" ry="1.2" fill="#e0e0e0" stroke="#8d8d8d" stroke-width="0.4"/>
<path d="M421.0 182.8 H427.4 V207.0 L424.2 208.5 L421.0 207.0 Z" fill="#c8c8c8"/>
<path d="M421.0 185.9 L427.4 183.3 L427.4 185.7 L421.0 188.3 Z" fill="#525252"/>
<path d="M421.0 190.9 L427.4 188.3 L427.4 190.7 L421.0 193.3 Z" fill="#525252"/>
<path d="M421.0 195.9 L427.4 193.3 L427.4 195.7 L421.0 198.3 Z" fill="#525252"/>
<path d="M421.0 200.9 L427.4 198.3 L427.4 200.7 L421.0 203.3 Z" fill="#525252"/>
<path d="M421.0 205.9 L427.4 203.3 L427.4 205.7 L421.0 208.3 Z" fill="#525252"/>
<path d="M421.0 182.8 V207.0 M427.4 182.8 V207.0" stroke="#777" stroke-width="0.4"/>
<polygon points="420.5,214.8 427.9,214.8 424.2,226.5" fill="#2c2688"/>
<rect x="368.7" y="240.5" width="7.6" height="6.5" fill="#666"/>
<ellipse cx="372.5" cy="246.8" rx="3.8" ry="1.6" fill="#666"/>
<ellipse cx="372.5" cy="240.6" rx="3.8" ry="1.7" fill="#8a8a8a" stroke="#4c4c4c" stroke-width="0.5"/>
<line x1="372.9" y1="218.9" x2="372.9" y2="224.6" stroke="#aaa6d6" stroke-width="0.8"/>
<rect x="369.8" y="185.7" width="6.1" height="7.6" fill="url(#gCyl)" stroke="#999" stroke-width="0.3"/>
<ellipse cx="372.9" cy="185.7" rx="3.0" ry="1.2" fill="#e0e0e0" stroke="#8d8d8d" stroke-width="0.4"/>
<path d="M369.8 193.3 H375.9 V217.4 L372.9 218.9 L369.8 217.4 Z" fill="#c8c8c8"/>
<path d="M369.8 196.4 L375.9 193.8 L375.9 196.2 L369.8 198.8 Z" fill="#525252"/>
<path d="M369.8 201.4 L375.9 198.8 L375.9 201.2 L369.8 203.8 Z" fill="#525252"/>
<path d="M369.8 206.4 L375.9 203.8 L375.9 206.2 L369.8 208.8 Z" fill="#525252"/>
<path d="M369.8 211.4 L375.9 208.8 L375.9 211.2 L369.8 213.8 Z" fill="#525252"/>
<path d="M369.8 216.4 L375.9 213.8 L375.9 216.2 L369.8 218.8 Z" fill="#525252"/>
<path d="M369.8 193.3 V217.4 M375.9 193.3 V217.4" stroke="#777" stroke-width="0.4"/>
<polygon points="369.2,224.6 376.6,224.6 372.9,237.0" fill="#2c2688"/>
<rect x="389.2" y="247.5" width="6.7" height="6.1" fill="#666"/>
<ellipse cx="392.5" cy="253.4" rx="3.3" ry="1.6" fill="#666"/>
<ellipse cx="392.5" cy="247.6" rx="3.3" ry="1.7" fill="#8a8a8a" stroke="#4c4c4c" stroke-width="0.5"/>
<line x1="392.2" y1="225.6" x2="392.2" y2="232.2" stroke="#aaa6d6" stroke-width="0.8"/>
<rect x="389.2" y="193.3" width="6.1" height="6.6" fill="url(#gCyl)" stroke="#999" stroke-width="0.3"/>
<ellipse cx="392.2" cy="193.3" rx="3.1" ry="1.2" fill="#e0e0e0" stroke="#8d8d8d" stroke-width="0.4"/>
<path d="M389.2 199.9 H395.3 V224.1 L392.2 225.6 L389.2 224.1 Z" fill="#c8c8c8"/>
<path d="M389.2 203.0 L395.3 200.4 L395.3 202.8 L389.2 205.4 Z" fill="#525252"/>
<path d="M389.2 208.0 L395.3 205.4 L395.3 207.8 L389.2 210.4 Z" fill="#525252"/>
<path d="M389.2 213.0 L395.3 210.4 L395.3 212.8 L389.2 215.4 Z" fill="#525252"/>
<path d="M389.2 218.0 L395.3 215.4 L395.3 217.8 L389.2 220.4 Z" fill="#525252"/>
<path d="M389.2 223.0 L395.3 220.4 L395.3 222.8 L389.2 225.4 Z" fill="#525252"/>
<path d="M389.2 199.9 V224.1 M395.3 199.9 V224.1" stroke="#777" stroke-width="0.4"/>
<polygon points="388.6,232.2 395.9,232.2 392.2,243.7" fill="#2c2688"/>
<polygon points="344.3,338.6 405.7,312.2 470.0,312.2 470.0,325.7 378.6,373.0 378.6,376.4 359.3,368.3 340.7,361.4 340.7,347.1" fill="#fff"/>
<polygon points="379.0,393.0 466.4,342.1 510.9,319.3 511.5,384.6 431.4,430.2 379.0,404.3" fill="#fff"/>
<path d="M378.8 361.4 L470 317.9 V325.7 M378.8 361.4 V376.4 M340.7 347.3 L348.6 350" stroke="#9a9a9a" stroke-width="0.6" fill="none"/>
<path d="M466.4 342.1 L510.9 319.3" stroke="#8a8a8a" stroke-width="0.6" fill="none"/>
<path d="M431.4 411.2 L511.4 366.6 M428.6 408.8 L506 366.2 M431.4 411.2 V430.2 M379.0 395 V404.3" stroke="#9a9a9a" stroke-width="0.6" fill="none"/>
<path d="M344.3 338.6 L404.3 312.9 M344.3 343.6 L395.7 322.1 M430.7 326 L432 318.8 L437.6 314.4" stroke="#8c8c8c" stroke-width="0.6" fill="none"/>
<rect x="341.2" y="327.9" width="2.8" height="16.4" fill="#5a5a5a"/><rect x="341.2" y="327.9" width="2.8" height="6.5" fill="#8a8a8a"/>
<polygon points="340.7,355.0 359.3,360.0 428.6,328.6 409.3,323.3" fill="#c5c5c5"/>
<polygon points="340.7,355.0 359.3,360.0 359.3,368.3 340.7,361.4" fill="#9f9f9f"/>
<polygon points="359.3,360.0 428.6,328.6 428.6,336.4 359.3,368.3" fill="#a3a3a3"/>
<path d="M340.7 355 L359.3 360 L428.6 328.6 L409.3 323.3 Z M359.3 360 V368.3 M340.7 355 V361.4 L359.3 368.3 L428.6 336.4 V328.6" fill="none" stroke="#858585" stroke-width="0.5"/>
<path d="M361 358 L426 328.4" stroke="#9a9a9a" stroke-width="0.5" stroke-dasharray="0.8 0.8"/>
<rect x="344" y="351.6" width="13" height="11" fill="#d6d6e6" opacity="0.55"/>
<text x="350.9" y="351.4" font-size="10.4" fill="#3b3788" stroke="#3b3788" stroke-width="0.25" font-family="Liberation Sans, sans-serif">L</text>
<polygon points="394.0,319.6 394.0,323.6 398.0,321.6" fill="#2b2778"/>
<polygon points="427.4,318.8 427.4,322.8 423.4,320.8" fill="#2b2778"/>
<polygon points="435.8,313.4 435.8,316.6 439.0,315.0" fill="#2b2778"/>
<polygon points="347.2,355.0 347.2,359.0 351.2,357.0" fill="#2b2778"/>
<polygon points="363.6,348.4 363.6,352.4 359.6,350.4" fill="#2b2778"/>
<polygon points="374.0,382.1 457.8,340.0 502.1,351.4 403.6,394.3" fill="#c3c3c3"/>
<polygon points="374.0,382.1 403.6,394.3 403.6,407.1 374.0,395.0" fill="#a0a0a0"/>
<polygon points="403.6,394.3 502.1,351.4 502.1,362.4 403.6,407.1" fill="#ababab"/>
<path d="M398 386.6 L492 348.6" stroke="#9c9c9c" stroke-width="0.5" fill="none"/>
<polygon points="403.6,399.5 431.2,388.0 431.2,411.2 410.0,409.8 403.6,407.1" fill="#e9e9e9"/>
<path d="M405 400 V408.4 M408 399 V409.6 M411 397.6 V410 M414 396.4 V410.2 M403.6 402.4 L431 390.6 M403.6 404.8 L431 393.4 M410 409.6 L431.2 398.6 M414 410.4 L431.3 402" stroke="#777" stroke-width="0.4" fill="none"/>
<path d="M403.6 397.6 L502.1 354.2 M403.6 400.8 L502.1 357.2 M403.6 404 L502.1 360" stroke="#d4d4d4" stroke-width="0.5" fill="none"/>
<rect x="428.6" y="383.6" width="3.4" height="14.6" fill="#8a8a8a" stroke="#777" stroke-width="0.3"/>
<rect x="438.4" y="379.6" width="2.6" height="13.6" fill="#8a8a8a" stroke="#777" stroke-width="0.3"/>
<rect x="447.2" y="375.4" width="3.4" height="14.2" fill="#8a8a8a" stroke="#777" stroke-width="0.3"/>
<path d="M374 382.1 L457.8 340 L502.1 351.4 L403.6 394.3 Z M403.6 394.3 V407.1 L374 395 V382.1 M403.6 407.1 L431 395" fill="none" stroke="#808080" stroke-width="0.5"/>
<rect x="500.6" y="351.6" width="3.2" height="9.6" fill="#f4f4f4" stroke="#999" stroke-width="0.3"/>
<path d="M495 355 L505 350.6 M495 358 L505 353.6 M495 361 L505 356.6" stroke="#999" stroke-width="0.4"/>
<rect x="456.8" y="363.6" width="3.2" height="25.8" fill="#555"/><rect x="457.5" y="363.6" width="1.2" height="14" fill="#9a9a9a"/>
<rect x="484.1" y="342.6" width="3.2" height="24.6" fill="#555"/><rect x="484.8" y="342.6" width="1.2" height="13" fill="#9a9a9a"/>
<ellipse cx="485.7" cy="342.8" rx="1.8" ry="0.8" fill="#9a9a9a"/>
<text x="402.6" y="361.3" font-size="11.2" fill="#3b3788" stroke="#3b3788" stroke-width="0.25" font-family="Liberation Sans, sans-serif">R=?,00</text>
<path d="M412.9 363.6 L430.2 376.6 M412.9 363.6 L439.6 373.8" stroke="#7a78a8" stroke-width="0.5" fill="none"/>
<polygon points="428.7,380.7 433.3,380.7 431.0,376.1" fill="#2b2778"/>
<polygon points="437.7,378.1 442.3,378.1 440.0,373.5" fill="#2b2778"/>
<text x="386.0" y="399.4" font-size="10.2" fill="#3b3788" stroke="#3b3788" stroke-width="0.25" font-family="Liberation Sans, sans-serif">A</text>
<polygon points="397.0,395.4 397.0,399.8 401.4,397.6" fill="#2b2778"/>
<polygon points="408.6,398.8 408.6,403.2 404.2,401.0" fill="#2b2778"/>
<polygon points="408.7,385.3 408.7,389.3 412.7,387.3" fill="#2b2778"/>
<polygon points="421.3,388.4 421.3,392.4 417.3,390.4" fill="#2b2778"/>
<polygon points="411.6,392.0 411.6,396.0 415.6,394.0" fill="#2b2778"/>
<polygon points="424.9,395.4 424.9,399.4 420.9,397.4" fill="#2b2778"/>
<text x="473.2" y="399.8" font-size="11.6" fill="#3b3788" stroke="#3b3788" stroke-width="0.25" font-family="Liberation Sans, sans-serif">T</text>
<path d="M475.9 372 V391" stroke="#aaa8d0" stroke-width="0.6"/>
<polygon points="473.2,374.6 478.4,374.6 475.8,379.8" fill="#2b2778"/>
<polygon points="473.3,387.2 478.5,387.2 475.9,382.0" fill="#2b2778"/>
<polygon points="478.6,357.8 483.8,357.8 481.2,363.0" fill="#2b2778"/>
<polygon points="478.8,372.4 484.0,372.4 481.4,367.2" fill="#2b2778"/>
<polygon points="495.3,359.0 500.5,359.0 497.9,364.2" fill="#2b2778"/>
<polygon points="495.3,372.8 500.5,372.8 497.9,367.6" fill="#2b2778"/>
<text x="504.0" y="342.6" font-size="10.6" fill="#3b3788" stroke="#3b3788" stroke-width="0.25" font-family="Liberation Sans, sans-serif">Z</text>
<path d="M506.5 344 V364" stroke="#aaa8d0" stroke-width="0.6"/>
<polygon points="503.9,347.8 509.1,347.8 506.5,353.0" fill="#2b2778"/>
<polygon points="503.9,362.2 509.1,362.2 506.5,357.0" fill="#2b2778"/>
<polygon points="339.2,416.3 397.6,416.3 418.9,428.6 418.9,457.6 339.2,457.6" fill="#f5f5f5" stroke="#8c8c8c" stroke-width="0.5" stroke-dasharray="1.2 1"/>
<path d="M379.4 416.3 V457.6" stroke="#8c8c8c" stroke-width="0.6" stroke-dasharray="1 0.8"/>
<polygon points="366.4,417.6 375.0,417.6 373.2,424.8 368.2,424.8" fill="#585858"/>
<rect x="369.9" y="424.8" width="1.7" height="5" fill="#7e7e7e"/><rect x="362.6" y="429.3" width="16.2" height="1.9" fill="#7e7e7e"/>
<text x="345.0" y="431.0" font-size="9.6" fill="#3b3788" stroke="#3b3788" stroke-width="0.25" font-family="Liberation Sans, sans-serif">R</text>
<polygon points="358.5,428.2 358.5,432.4 354.3,430.3" fill="#2b2778"/>
<path d="M358.5 430.3 H362" stroke="#2b2778" stroke-width="0.5"/>
<polygon points="350.7,438.1 354.9,438.1 352.8,433.9" fill="#2b2778"/>
<path d="M352.8 438 V441" stroke="#2b2778" stroke-width="0.5"/>
<polygon points="368.3,435.9 372.5,435.9 370.4,440.1" fill="#2b2778"/>
<path d="M370.4 432.5 V436" stroke="#2b2778" stroke-width="0.5"/>
<polygon points="339.6,445.4 339.6,453.0 346.8,451.2 346.8,447.2" fill="#585858"/>
<rect x="346.8" y="448.4" width="5.4" height="1.8" fill="#7e7e7e"/><rect x="351.9" y="441.6" width="1.9" height="15.8" fill="#7e7e7e"/>
<polygon points="358.5,447.3 358.5,451.5 362.7,449.4" fill="#2b2778"/>
<path d="M355 449.4 H358.5" stroke="#2b2778" stroke-width="0.5"/>
<text x="366.2" y="452.4" font-size="9.8" fill="#3b3788" stroke="#3b3788" stroke-width="0.25" font-family="Liberation Sans, sans-serif">Z</text>
<polygon points="382.4,417.6 391.0,417.6 389.2,424.8 384.2,424.8" fill="#585858"/>
<rect x="385.6" y="424.8" width="1.9" height="10" fill="#7e7e7e"/>
<polygon points="391.9,426.5 391.9,430.7 396.1,428.6" fill="#2b2778"/>
<path d="M388.5 428.6 H392" stroke="#2b2778" stroke-width="0.5"/>
<text x="400.8" y="437.2" font-size="9.6" fill="#3b3788" stroke="#3b3788" stroke-width="0.25" font-family="Liberation Sans, sans-serif">R</text>
<polygon points="384.4,439.7 388.6,439.7 386.5,443.9" fill="#2b2778"/>
<path d="M386.5 436 V439.8" stroke="#2b2778" stroke-width="0.5"/>
<polygon points="402.7,444.5 406.9,444.5 404.8,440.3" fill="#2b2778"/>
<path d="M404.8 444.4 V447.8" stroke="#2b2778" stroke-width="0.5"/>
<text x="382.2" y="455.4" font-size="9.8" fill="#3b3788" stroke="#3b3788" stroke-width="0.25" font-family="Liberation Sans, sans-serif">Z</text>
<polygon points="395.5,447.5 395.5,451.7 391.3,449.6" fill="#2b2778"/>
<path d="M395.4 449.6 H398.6" stroke="#2b2778" stroke-width="0.5"/>
<rect x="399.8" y="448.6" width="10.8" height="1.9" fill="#7e7e7e"/>
<polygon points="417.8,445.6 417.8,453.4 410.5,451.4 410.5,447.6" fill="#585858"/>
</svg>
<div style="position:absolute;left:293.0px;top:491.2px;width:53.4px;height:16.2px;background:#f0f0f0;box-sizing:border-box;border:1px solid #9a9a9a;box-shadow:inset 1px 1px 0 #fdfdfd, inset -1px -1px 0 #c4c4c4;"></div>
<div style="position:absolute;left:315.0px;top:494.6px;line-height:10px;font-size:8.05px;letter-spacing:-1.043258203125001px;color:#1a1a1a;white-space:nowrap;"><span style="text-decoration:underline;text-underline-offset:0.6px;text-decoration-thickness:0.6px;text-decoration-color:#8a8a8a">O</span>k</div>
<div style="position:absolute;left:354.2px;top:491.4px;width:53.0px;height:16.0px;background:#f0f0f0;box-sizing:border-box;border-top:1px solid #fbfbfb;border-left:1px solid #fbfbfb;border-right:1px solid #a8a8a8;border-bottom:1px solid #a8a8a8;"></div>
<div style="position:absolute;left:366.6px;top:494.6px;line-height:10px;font-size:8.05px;letter-spacing:-0.34047957589285716px;color:#1a1a1a;white-space:nowrap;"><span style="text-decoration:underline;text-underline-offset:0.6px;text-decoration-thickness:0.6px;text-decoration-color:#8a8a8a">A</span>bbruch</div>
</div></div></body></html>
